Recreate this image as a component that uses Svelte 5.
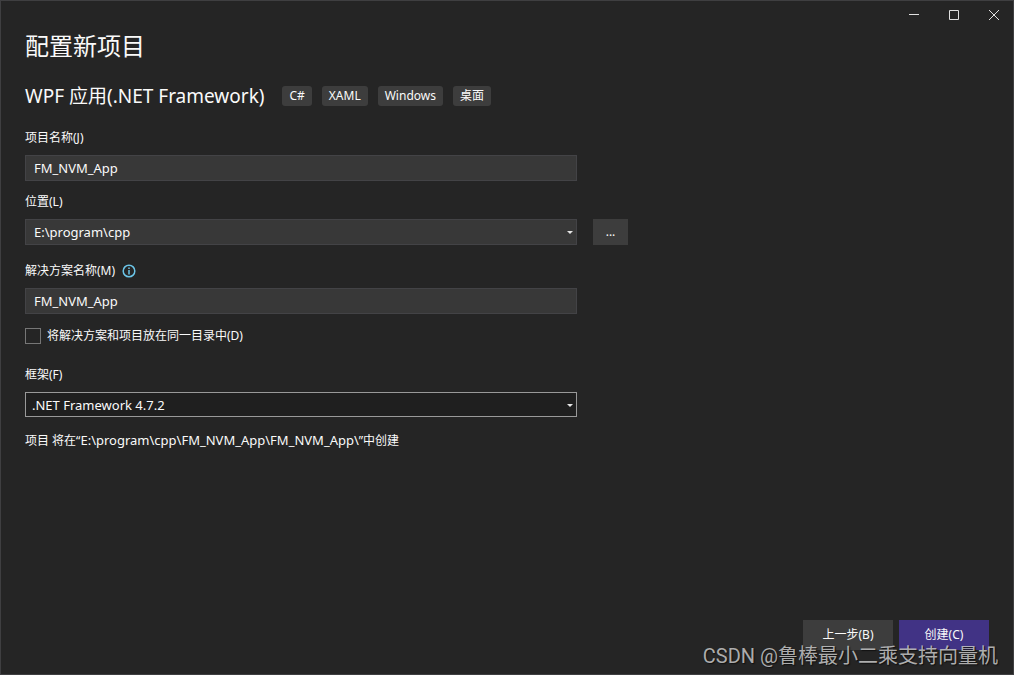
<script>
    let projectName = $state("FM_NVM_App");
    let solutionName = $state("FM_NVM_App");
    let location = $state("E:\\program\\cpp");
    let framework = $state(".NET Framework 4.7.2");
    let sameDirectory = $state(false);

    const tags = ["C#", "XAML", "Windows", "桌面"];

    // 项目最终的创建路径
    let targetPath = $derived(
        sameDirectory
            ? `${location}\\${projectName}\\`
            : `${location}\\${solutionName}\\${projectName}\\`
    );
</script>

<div class="window">
    <header class="title-bar">
        <button aria-label="最小化">
            <svg width="10" height="10" viewBox="0 0 10 10"><path d="M0 4.5h10" /></svg>
        </button>
        <button aria-label="最大化">
            <svg width="10" height="10" viewBox="0 0 10 10"><path d="M.5 .5h9v9h-9z" /></svg>
        </button>
        <button aria-label="关闭">
            <svg width="10" height="10" viewBox="0 0 10 10"><path d="M0 0l10 10M10 0L0 10" /></svg>
        </button>
    </header>

    <main>
        <h1>配置新项目</h1>
        <div class="template">
            <h2>WPF 应用(.NET Framework)</h2>
            <ul class="tags">
                {#each tags as tag}
                    <li>{tag}</li>
                {/each}
            </ul>
        </div>

        <form id="project-form" onsubmit={(e) => e.preventDefault()}>
            <div class="field">
                <label for="project-name">项目名称(J)</label>
                <input id="project-name" class="box" type="text" bind:value={projectName} />
            </div>

            <div class="field location">
                <label for="location">位置(L)</label>
                <div class="row">
                    <div class="select">
                        <select id="location" class="box" bind:value={location}>
                            <option>E:\program\cpp</option>
                        </select>
                        <svg class="arrow" width="6" height="3" viewBox="0 0 6 3"><path d="M0 0h6L3 3z" /></svg>
                    </div>
                    <button class="browse" type="button" aria-label="浏览">...</button>
                </div>
            </div>

            <div class="field solution">
                <div class="label-row">
                    <label for="solution-name">解决方案名称(M)</label>
                    <svg class="info" width="14" height="14" viewBox="0 0 14 14">
                        <circle cx="7" cy="7" r="5.8" />
                        <path d="M7 3.4v1.5M7 6v4.6" />
                    </svg>
                </div>
                <input id="solution-name" class="box" type="text" bind:value={solutionName} />
            </div>

            <label class="check">
                <input type="checkbox" bind:checked={sameDirectory} />
                将解决方案和项目放在同一目录中(D)
            </label>

            <div class="field framework">
                <label for="framework">框架(F)</label>
                <div class="select">
                    <select id="framework" class="box" bind:value={framework}>
                        <option>.NET Framework 4.7.2</option>
                    </select>
                    <svg class="arrow" width="6" height="3" viewBox="0 0 6 3"><path d="M0 0h6L3 3z" /></svg>
                </div>
            </div>

            <p class="summary">项目 将在“<span>{targetPath}</span>”中创建</p>
        </form>
    </main>

    <footer>
        <button type="button">上一步(B)</button>
        <button class="primary" type="submit" form="project-form">创建(C)</button>
    </footer>

    <div class="watermark">CSDN @鲁棒最小二乘支持向量机</div>
</div>

<style>
    :global(body) {
        margin: 0;
        background: #252525;
    }

    .window {
        position: relative;
        display: flex;
        flex-direction: column;
        box-sizing: border-box;
        min-height: 100vh;
        border: 1px solid #3f3f41;
        background: #252525;
        color: #fafafa;
        font-family: "Noto Sans", "Noto Sans CJK SC", sans-serif;
        font-size: 12px;
        line-height: 16px;
    }

    button,
    input,
    select {
        margin: 0;
        color: inherit;
        font: inherit;
    }

    button {
        padding: 0;
        border: none;
        background: #3d3d3d;
    }

    .title-bar {
        display: flex;
        justify-content: flex-end;
        margin: 0 -1px 1px 0;
    }

    .title-bar button {
        display: flex;
        align-items: center;
        justify-content: center;
        width: 40px;
        height: 28px;
        background: none;
    }

    .title-bar path {
        fill: none;
        stroke: #e0e0e0;
    }

    main {
        flex: 1;
        padding: 0 24px;
    }

    h1,
    h2 {
        margin: 0;
        font-weight: 400;
    }

    h1 {
        font-size: 24px;
        line-height: 32px;
    }

    .template {
        display: flex;
        align-items: center;
        gap: 18px;
        margin: 20px 0;
    }

    h2 {
        font-size: 19px;
        line-height: 28px;
    }

    .tags {
        display: flex;
        gap: 10px;
        margin: 0;
        padding: 0;
        list-style: none;
    }

    .tags li {
        padding: 0 7px;
        border-radius: 3px;
        background: #3d3d3d;
        line-height: 20px;
    }

    .field {
        display: flex;
        flex-direction: column;
        gap: 9px;
        max-width: 552px;
        margin-bottom: 13px;
    }

    .location {
        max-width: 603px;
        margin-bottom: 18px;
    }

    .solution {
        margin-bottom: 14px;
    }

    .row {
        display: flex;
        gap: 16px;
    }

    .label-row {
        display: flex;
        align-items: center;
        gap: 7px;
    }

    .info {
        fill: none;
        stroke: #6cc5e8;
        stroke-width: 1.5;
    }

    .box {
        box-sizing: border-box;
        width: 100%;
        height: 26px;
        padding: 0 8px;
        border: 1px solid #434346;
        border-radius: 0;
        outline: none;
        background: #383838;
        font-size: 13px;
        appearance: none;
    }

    .select {
        position: relative;
        flex: 1;
    }

    .select .box {
        display: block;
    }

    .arrow {
        position: absolute;
        top: 12px;
        right: 4px;
        fill: #e6e6e6;
    }

    .browse {
        width: 35px;
        height: 26px;
    }

    .check {
        display: flex;
        align-items: center;
        gap: 6px;
        width: fit-content;
        margin-bottom: 23px;
    }

    .check input {
        width: 16px;
        height: 16px;
        border: 1px solid #767676;
        appearance: none;
    }

    .check input:checked {
        background: #6cc5e8;
    }

    .framework {
        margin-bottom: 15px;
    }

    .framework .box {
        height: 25px;
        padding: 0 6px;
        border-color: #999;
        background: #1f1f1f;
    }

    .summary {
        margin: 0;
    }

    .summary span {
        font-size: 13px;
    }

    footer {
        display: flex;
        justify-content: flex-end;
        gap: 6px;
        padding: 0 24px 24px;
    }

    footer button {
        width: 90px;
        height: 30px;
    }

    footer .primary {
        background: #413385;
    }

    .watermark {
        position: absolute;
        right: 15px;
        bottom: 4px;
        color: rgba(200, 200, 200, 0.85);
        font-family: Roboto, "Noto Sans CJK SC", sans-serif;
        font-size: 20px;
        line-height: 28px;
        text-shadow: 1px 1px 1px #111;
        pointer-events: none;
    }
</style>
